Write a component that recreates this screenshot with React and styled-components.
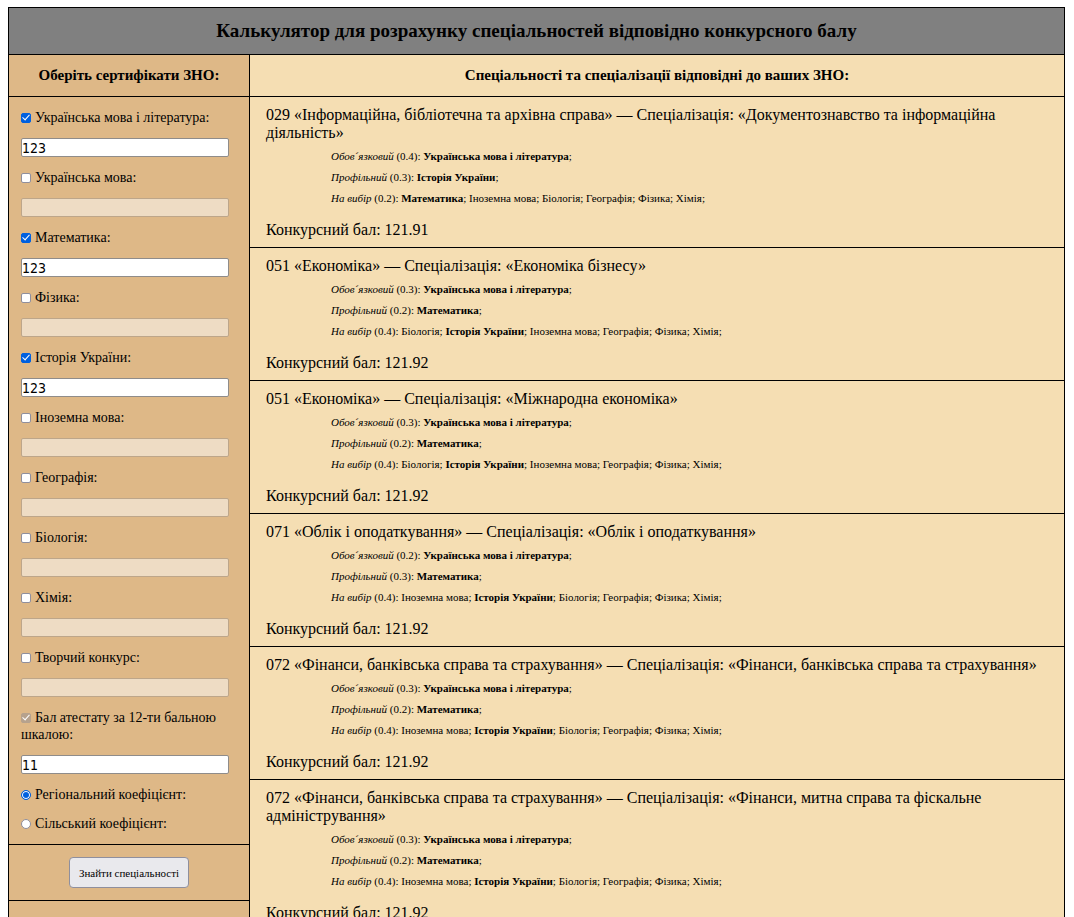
import React, { useState } from "react";
import styled, { createGlobalStyle } from "styled-components";

const GlobalStyle = createGlobalStyle`
  *, *::before, *::after { box-sizing: border-box; }
  body {
    margin: 7px 9px 8px 8px;
    background: #fff;
    color: #000;
    font-family: "Liberation Serif", "Times New Roman", serif;
  }
`;

const Page = styled.div`
  border: 1px solid #000;
`;

const PageTitle = styled.h1`
  margin: 0;
  padding: 12px;
  background: gray;
  border-bottom: 1px solid #000;
  font-size: 19px;
  line-height: 22px;
  text-align: center;
`;

const Columns = styled.div`
  display: grid;
  grid-template-columns: 241px minmax(0, 1fr);
`;

const Sidebar = styled.form`
  background: burlywood;
  border-right: 1px solid #000;
`;

const Results = styled.main`
  background: wheat;
`;

const ColumnTitle = styled.h2`
  margin: 0;
  padding: 12px;
  border-bottom: 1px solid #000;
  font-size: 15px;
  line-height: 17px;
  text-align: center;
`;

const Fields = styled.div`
  display: flex;
  flex-direction: column;
  gap: 12px;
  padding: 12px 20px 12px 12px;
  border-bottom: 1px solid #000;
`;

const FieldLabel = styled.label`
  font-size: 14px;
  line-height: 17px;
`;

const Control = styled.input`
  appearance: none;
  width: 10px;
  height: 10px;
  margin: 0 4px 2px 0;
  border: 1px solid #8f8f9d;
  background: #fff;
  vertical-align: middle;
`;

const Tick = styled(Control)`
  display: inline-grid;
  place-items: center;
  border-radius: 2px;

  &:checked {
    background: #0060df;
    border-color: #0060df;
  }

  &:checked::after {
    content: "";
    width: 4px;
    height: 7px;
    border: solid #fff;
    border-width: 0 1px 1px 0;
    transform: translateY(-1px) rotate(42deg);
  }

  &:disabled {
    background: #b6a28d;
    border-color: #b6a28d;
  }
`;

const Radio = styled(Control)`
  border-radius: 50%;

  &:checked {
    border-color: #0060df;
    background: #0060df;
    box-shadow: inset 0 0 0 1px #fff;
  }
`;

const ScoreInput = styled.input`
  width: 100%;
  height: 19px;
  padding: 0;
  border: 1px solid #8f8c8a;
  border-radius: 2px;
  background: #fff;
  color: #000;
  font-family: "DejaVu Sans Condensed", "DejaVu Sans", sans-serif;
  font-size: 14px;

  &:disabled {
    background: #eedcc4;
    border-color: #bda68a;
  }
`;

const Actions = styled.div`
  display: flex;
  justify-content: center;
  padding: 12px;
  border-bottom: 1px solid #000;
`;

const SubmitButton = styled.button`
  width: 120px;
  height: 31px;
  padding: 0;
  border: 1px solid #8f8f9d;
  border-radius: 4px;
  background: #e9e9ed;
  color: #000;
  font-family: inherit;
  font-size: 11px;
`;

const Specialty = styled.article`
  padding: 9px 16px 8px;
  border-bottom: 1px solid #000;

  &:last-child { border-bottom: 0; }
`;

const SpecialtyTitle = styled.h3`
  margin: 0;
  font-size: 16px;
  font-weight: 400;
  line-height: 18px;
`;

const Criteria = styled.div`
  display: flex;
  flex-direction: column;
  gap: 8px;
  padding: 8px 0 16px 65px;
`;

const Criterion = styled.p`
  margin: 0;
  font-size: 11px;
  line-height: 13px;
`;

const Score = styled.p`
  margin: 0;
  font-size: 16px;
  line-height: 18px;
`;

const initialSubjects = [
  { id: "ukr-lit", name: "Українська мова і література", on: true, score: "123" },
  { id: "ukr", name: "Українська мова", on: false, score: "" },
  { id: "math", name: "Математика", on: true, score: "123" },
  { id: "physics", name: "Фізика", on: false, score: "" },
  { id: "history", name: "Історія України", on: true, score: "123" },
  { id: "foreign", name: "Іноземна мова", on: false, score: "" },
  { id: "geography", name: "Географія", on: false, score: "" },
  { id: "biology", name: "Біологія", on: false, score: "" },
  { id: "chemistry", name: "Хімія", on: false, score: "" },
  { id: "creative", name: "Творчий конкурс", on: false, score: "" },
  { id: "school", name: "Бал атестату за 12-ти бальною шкалою", on: true, score: "11", locked: true },
];

const UKR = "Українська мова і література";
const HIST = "Історія України";
const MATH = "Математика";
const economics = ["Біологія", HIST, "Іноземна мова", "Географія", "Фізика", "Хімія"];
const finance = ["Іноземна мова", HIST, "Біологія", "Географія", "Фізика", "Хімія"];

const specialties = [
  {
    title: "029 «Інформаційна, бібліотечна та архівна справа» — Спеціалізація: «Документознавство та інформаційна діяльність»",
    weights: ["0.4", "0.3", "0.2"],
    profile: HIST,
    options: [MATH, "Іноземна мова", "Біологія", "Географія", "Фізика", "Хімія"],
    chosen: MATH,
    score: "121.91",
  },
  {
    title: "051 «Економіка» — Спеціалізація: «Економіка бізнесу»",
    weights: ["0.3", "0.2", "0.4"],
    profile: MATH, options: economics, chosen: HIST, score: "121.92",
  },
  {
    title: "051 «Економіка» — Спеціалізація: «Міжнародна економіка»",
    weights: ["0.3", "0.2", "0.4"],
    profile: MATH, options: economics, chosen: HIST, score: "121.92",
  },
  {
    title: "071 «Облік і оподаткування» — Спеціалізація: «Облік і оподаткування»",
    weights: ["0.2", "0.3", "0.4"],
    profile: MATH, options: finance, chosen: HIST, score: "121.92",
  },
  {
    title: "072 «Фінанси, банківська справа та страхування» — Спеціалізація: «Фінанси, банківська справа та страхування»",
    weights: ["0.3", "0.2", "0.4"],
    profile: MATH, options: finance, chosen: HIST, score: "121.92",
  },
  {
    title: "072 «Фінанси, банківська справа та страхування» — Спеціалізація: «Фінанси, митна справа та фіскальне адміністрування»",
    weights: ["0.3", "0.2", "0.4"],
    profile: MATH, options: finance, chosen: HIST, score: "121.92",
  },
];

function SubjectField({ subject, onChange }) {
  return (
    <>
      <FieldLabel>
        <Tick
          type="checkbox"
          checked={subject.on}
          disabled={subject.locked}
          onChange={(e) => onChange({ ...subject, on: e.target.checked })}
        />
        {subject.name}:
      </FieldLabel>
      <ScoreInput
        type="text"
        inputMode="decimal"
        aria-label={subject.name}
        id={subject.id}
        value={subject.score}
        disabled={!subject.on}
        onChange={(e) => onChange({ ...subject, score: e.target.value })}
      />
    </>
  );
}

function SpecialtyItem({ item }) {
  const [required, profile, optional] = item.weights;
  return (
    <Specialty>
      <SpecialtyTitle>{item.title}</SpecialtyTitle>
      <Criteria>
        <Criterion><i>Обов´язковий</i> ({required}): <b>{UKR}</b>;</Criterion>
        <Criterion><i>Профільний</i> ({profile}): <b>{item.profile}</b>;</Criterion>
        <Criterion>
          <i>На вибір</i> ({optional}):
          {item.options.map((name) => (
            <React.Fragment key={name}>
              {" "}{name === item.chosen ? <b>{name}</b> : name};
            </React.Fragment>
          ))}
        </Criterion>
      </Criteria>
      <Score>Конкурсний бал: {item.score}</Score>
    </Specialty>
  );
}

export default function App() {
  const [subjects, setSubjects] = useState(initialSubjects);
  const [region, setRegion] = useState("regional");
  const update = (next) =>
    setSubjects((list) => list.map((s) => (s.id === next.id ? next : s)));

  return (
    <>
      <GlobalStyle />
      <Page>
        <PageTitle>Калькулятор для розрахунку спеціальностей відповідно конкурсного балу</PageTitle>
        <Columns>
          <Sidebar onSubmit={(e) => e.preventDefault()}>
            <ColumnTitle>Оберіть сертифікати ЗНО:</ColumnTitle>
            <Fields>
              {subjects.map((s) => (
                <SubjectField key={s.id} subject={s} onChange={update} />
              ))}
              <FieldLabel>
                <Radio type="radio" name="region" checked={region === "regional"} onChange={() => setRegion("regional")} />
                Регіональний коефіцієнт:
              </FieldLabel>
              <FieldLabel>
                <Radio type="radio" name="region" checked={region === "rural"} onChange={() => setRegion("rural")} />
                Сільський коефіцієнт:
              </FieldLabel>
            </Fields>
            <Actions>
              <SubmitButton type="submit">Знайти спеціальності</SubmitButton>
            </Actions>
          </Sidebar>
          <Results>
            <ColumnTitle>Спеціальності та спеціалізації відповідні до ваших ЗНО:</ColumnTitle>
            {specialties.map((item) => (
              <SpecialtyItem key={item.title} item={item} />
            ))}
          </Results>
        </Columns>
      </Page>
    </>
  );
}
